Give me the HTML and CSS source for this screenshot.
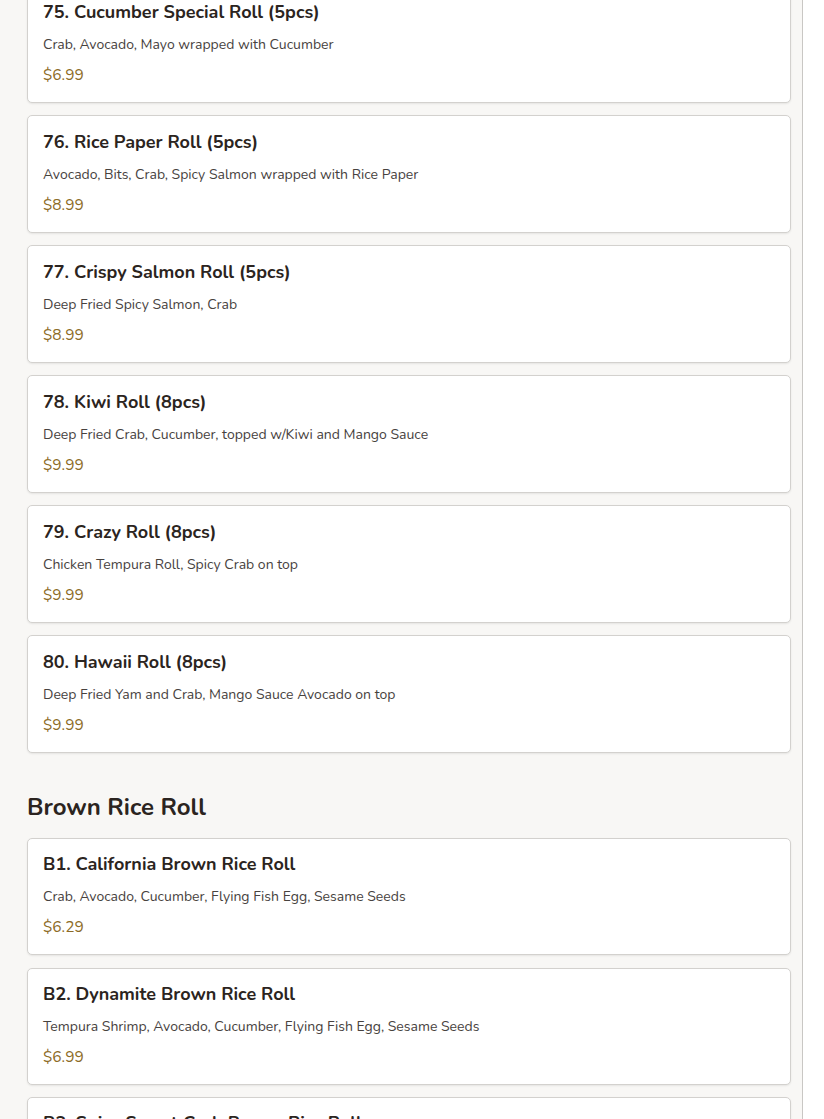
FILE: index.html
```html
<!DOCTYPE html>
<html>
<head>
<meta charset="utf-8">
<link rel="stylesheet" href="styles.css">
</head>
<body>
<div class="page">
  <div class="list first">
    <div class="card"><div class="title">75. Cucumber Special Roll (5pcs)</div><div class="desc">Crab, Avocado, Mayo wrapped with Cucumber</div><div class="price">$6.99</div></div>
    <div class="card"><div class="title">76. Rice Paper Roll (5pcs)</div><div class="desc">Avocado, Bits, Crab, Spicy Salmon wrapped with Rice Paper</div><div class="price">$8.99</div></div>
    <div class="card"><div class="title">77. Crispy Salmon Roll (5pcs)</div><div class="desc">Deep Fried Spicy Salmon, Crab</div><div class="price">$8.99</div></div>
    <div class="card"><div class="title">78. Kiwi Roll (8pcs)</div><div class="desc">Deep Fried Crab, Cucumber, topped w/Kiwi and Mango Sauce</div><div class="price">$9.99</div></div>
    <div class="card"><div class="title">79. Crazy Roll (8pcs)</div><div class="desc">Chicken Tempura Roll, Spicy Crab on top</div><div class="price">$9.99</div></div>
    <div class="card"><div class="title">80. Hawaii Roll (8pcs)</div><div class="desc">Deep Fried Yam and Crab, Mango Sauce Avocado on top</div><div class="price">$9.99</div></div>
  </div>
  <h2 class="section">Brown Rice Roll</h2>
  <div class="list brown">
    <div class="card"><div class="title">B1. California Brown Rice Roll</div><div class="desc">Crab, Avocado, Cucumber, Flying Fish Egg, Sesame Seeds</div><div class="price">$6.29</div></div>
    <div class="card"><div class="title">B2. Dynamite Brown Rice Roll</div><div class="desc">Tempura Shrimp, Avocado, Cucumber, Flying Fish Egg, Sesame Seeds</div><div class="price">$6.99</div></div>
    <div class="card"><div class="title">B3. Spicy Sweet Crab Brown Rice Roll</div><div class="desc">Spicy Crab, Avocado, Cucumber, Sesame Seeds</div><div class="price">$6.99</div></div>
  </div>
</div>
</body>
</html>
```
FILE: styles.css
```css
html, body {
  margin: 0;
  padding: 0;
  background: #ffffff;
  overflow: hidden;
}
body {
  font-family: "Nunito", "Lato", "Noto Sans", sans-serif;
}
.page {
  width: 803px;
  box-sizing: border-box;
  border-right: 1px solid #c9c7c4;
  background: #f8f7f5;
  padding: 0 11px 0 27px;
  min-height: 1200px;
}
.list {
  display: flex;
  flex-direction: column;
  gap: 12px;
}
.list.first {
  margin-top: -15px;
}
.card {
  background: #ffffff;
  border: 1px solid #d3d1ce;
  border-radius: 5px;
  box-shadow: 0 1px 2px rgba(0,0,0,0.08);
  padding: 14px 16px 16px 15px;
  height: 118px;
  box-sizing: border-box;
}
.list.brown .card {
  height: 117px;
  padding-top: 13px;
}
.list.brown .card + .card {
  margin-top: 1px;
}
.list.brown .card:last-child {
  margin-top: 0;
}
.title {
  font-size: 18px;
  line-height: 24px;
  font-weight: 700;
  color: #2b2420;
}
.desc {
  margin-top: 11px;
  font-size: 14px;
  line-height: 20px;
  color: #47423e;
}
.price {
  margin-top: 10px;
  font-size: 15.5px;
  line-height: 20px;
  color: #8c6b26;
}
.section {
  margin: 38px 0 15px;
  font-size: 24px;
  line-height: 32px;
  font-weight: 700;
  color: #2b2420;
}
```
